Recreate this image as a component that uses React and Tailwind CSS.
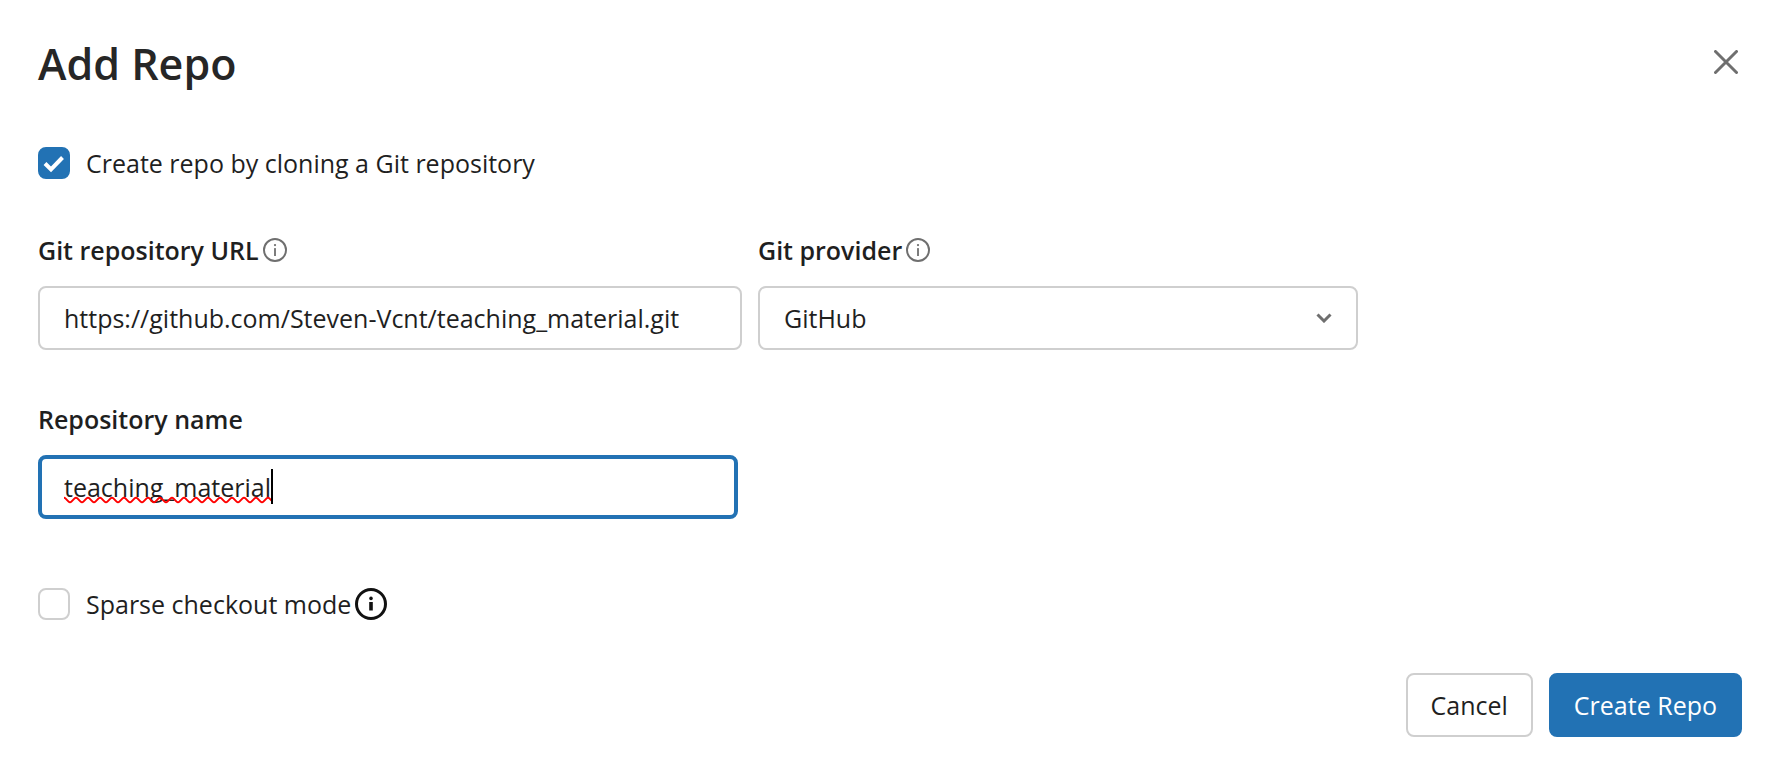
import { useState } from "react";

function InfoIcon({ className, bold = false }) {
  return (
    <svg viewBox="0 0 32 32" fill="none" className={className} aria-hidden="true">
      <circle cx="16" cy="16" r={bold ? 14.5 : 14.7} stroke="currentColor" strokeWidth={bold ? 3 : 2.6} />
      <rect x={bold ? 14.2 : 14.8} y={bold ? 14 : 13.5} width={bold ? 3.6 : 2.4} height={bold ? 8.5 : 10.5} fill="currentColor" />
      <circle cx="16" cy={bold ? 10.4 : 9.4} r={bold ? 1.8 : 1.5} fill="currentColor" />
    </svg>
  );
}

function SpellingMark({ className }) {
  return (
    <svg className={className} aria-hidden="true">
      <defs>
        <pattern id="wave" width="12" height="8" patternUnits="userSpaceOnUse">
          <path
            d="M-1.4 2.4 Q0 1 1.4 2.4 L4.6 5.6 Q6 7 7.4 5.6 L10.6 2.4 Q12 1 13.4 2.4"
            fill="none"
            stroke="#ff0000"
            strokeWidth="2"
          />
        </pattern>
      </defs>
      <rect width="100%" height="8" fill="url(#wave)" />
    </svg>
  );
}

function Checkbox({ id, checked, onChange }) {
  return (
    <span className="grid size-8 shrink-0">
      <input
        id={id}
        type="checkbox"
        checked={checked}
        onChange={onChange}
        className="peer col-start-1 row-start-1 size-8 appearance-none rounded-lg border-2 border-[#cfcfcf] bg-white checked:border-[#2272b4] checked:bg-[#2272b4]"
      />
      <svg
        viewBox="0 0 32 32"
        fill="none"
        className="pointer-events-none invisible col-start-1 row-start-1 size-8 text-white peer-checked:visible"
        aria-hidden="true"
      >
        <path d="M7 16.5 L13 22.5 L24.5 10.5" stroke="currentColor" strokeWidth="4" />
      </svg>
    </span>
  );
}

export default function App() {
  const [clone, setClone] = useState(true);
  const [sparse, setSparse] = useState(false);
  const [url, setUrl] = useState("https://github.com/Steven-Vcnt/teaching_material.git");
  const [name, setName] = useState("teaching_material");

  return (
    <main
      role="dialog"
      aria-labelledby="title"
      className="bg-white pt-9 pr-11 pb-11 pl-[38px] font-['Open_Sans','Noto_Sans',sans-serif] text-[25px] leading-8 text-[#1f1f1f]"
    >
      <header className="flex items-start justify-between">
        <h1 id="title" className="text-[43px] leading-14 font-semibold text-[#262626]">
          Add Repo
        </h1>
        <button type="button" aria-label="Close" className="grid h-[52px] w-8 place-items-center text-[#6f6f6f]">
          <svg viewBox="0 0 24 24" fill="none" className="size-6" aria-hidden="true">
            <path d="M1.5 1.5 L22.5 22.5 M22.5 1.5 L1.5 22.5" stroke="currentColor" strokeWidth="3" strokeLinecap="round" />
          </svg>
        </button>
      </header>

      <form onSubmit={(e) => e.preventDefault()}>
        <div className="mt-[55px] flex items-center gap-4">
          <Checkbox id="clone" checked={clone} onChange={(e) => setClone(e.target.checked)} />
          <label htmlFor="clone">Create repo by cloning a Git repository</label>
        </div>

        <div className="mt-[55px] flex max-w-[1320px] gap-4">
          <div className="min-w-0 flex-[704]">
            <div className="flex items-center gap-1">
              <label htmlFor="url" className="font-semibold">Git repository URL</label>
              <InfoIcon className="size-6 text-[#6f6f6f]" />
            </div>
            <input
              id="url"
              type="text"
              value={url}
              onChange={(e) => setUrl(e.target.value)}
              className="mt-5 block h-16 w-full rounded-lg border-2 border-[#cfcfcf] px-6"
            />
          </div>
          <div className="min-w-0 flex-[600]">
            <div className="flex items-center gap-1">
              <label htmlFor="provider" className="font-semibold">Git provider</label>
              <InfoIcon className="size-6 text-[#6f6f6f]" />
            </div>
            <div className="mt-5 grid items-center">
              <select
                id="provider"
                defaultValue="GitHub"
                className="col-start-1 row-start-1 h-16 w-full appearance-none rounded-lg border-2 border-[#cfcfcf] bg-white px-6"
              >
                <option>GitHub</option>
              </select>
              <svg
                viewBox="0 0 16 10"
                fill="none"
                className="pointer-events-none col-start-1 row-start-1 mr-[26px] h-[10px] w-4 justify-self-end text-[#6f6f6f]"
                aria-hidden="true"
              >
                <path d="M1.5 1.5 L8 8 L14.5 1.5" stroke="currentColor" strokeWidth="3" />
              </svg>
            </div>
          </div>
        </div>

        <div className="mt-[53px] max-w-[700px]">
          <label htmlFor="name" className="block font-semibold">Repository name</label>
          <div className="relative mt-5">
            <input
              id="name"
              type="text"
              value={name}
              spellCheck={false}
              onChange={(e) => setName(e.target.value)}
              className="block h-16 w-full rounded-lg border-4 border-[#2272b4] px-[22px] outline-none"
            />
            <div className="pointer-events-none absolute top-[14px] left-[26px] flex h-[35px] w-[209px] items-end">
              <SpellingMark className="h-2 min-w-0 flex-1" />
              <span className="h-full w-[2px] bg-black" />
            </div>
          </div>
        </div>

        <div className="mt-[69px] flex items-center gap-4">
          <Checkbox id="sparse" checked={sparse} onChange={(e) => setSparse(e.target.checked)} />
          <div className="flex items-center gap-1">
            <label htmlFor="sparse">Sparse checkout mode</label>
            <InfoIcon bold className="size-8 text-[#111111]" />
          </div>
        </div>

        <footer className="mt-[53px] flex justify-end gap-4">
          <button type="button" className="h-16 rounded-lg border-2 border-[#cfcfcf] bg-white px-[23px]">
            Cancel
          </button>
          <button type="submit" className="h-16 rounded-lg border-2 border-[#2272b4] bg-[#2272b4] px-[23px] text-white">
            Create Repo
          </button>
        </footer>
      </form>
    </main>
  );
}
